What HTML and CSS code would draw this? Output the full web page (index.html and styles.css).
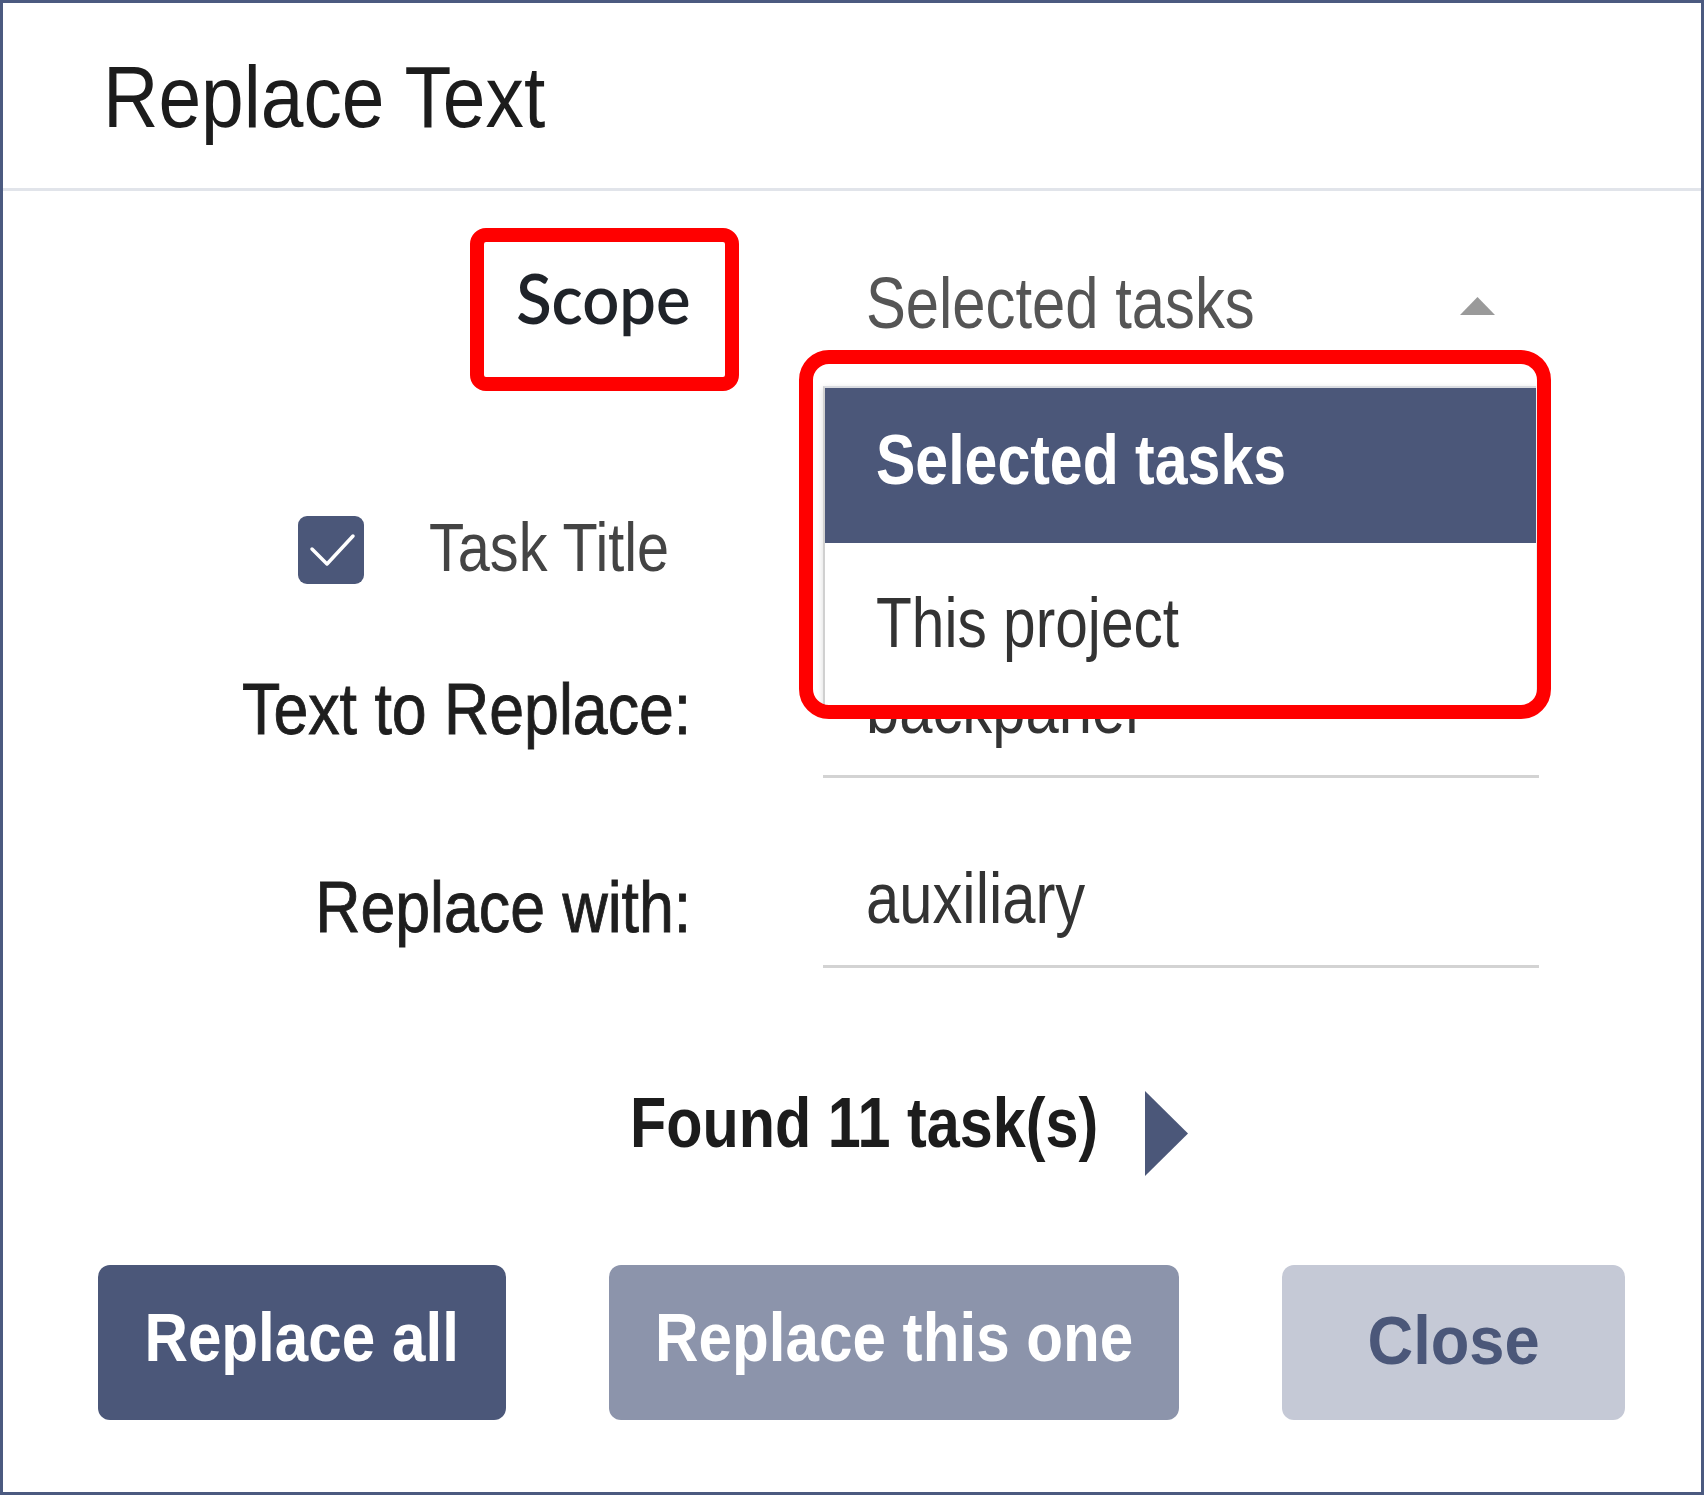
FILE: index.html
```html
<!DOCTYPE html>
<html lang="en">
<head>
<meta charset="utf-8">
<title>Replace Text</title>
<link rel="stylesheet" href="styles.css">
</head>
<body>
<div class="dialog">
  <header class="dlg-header">
    <h1 class="dlg-title"><span class="txt">Replace Text</span></h1>
  </header>
  <div class="dlg-body">
    <div class="row row-scope">
      <div class="label label-scope"><span class="txt">Scope</span></div>
      <div class="select">
        <span class="select-value txt">Selected tasks</span>
        <svg class="select-arrow" width="39" height="22" viewBox="0 0 39 22"><polygon points="19.5,2 37,20 2,20" fill="#9a9a9a"/></svg>
      </div>
    </div>
    <div class="row-check">
      <span class="checkbox"><svg width="66" height="68" viewBox="0 0 66 68"><polyline points="14,33 29,48 55,20" fill="none" stroke="#fff" stroke-width="3.5" stroke-linecap="round" stroke-linejoin="round"/></svg></span>
      <span class="check-label txt">Task Title</span>
    </div>
    <div class="row row-field row-find">
      <div class="label"><span class="txt">Text to Replace:</span></div>
      <div class="input"><span class="txt">backpanel</span></div>
    </div>
    <div class="row row-field row-with">
      <div class="label"><span class="txt">Replace with:</span></div>
      <div class="input"><span class="txt">auxiliary</span></div>
    </div>
    <div class="found">
      <span class="found-text txt">Found 11 task(s)</span>
      <svg class="found-arrow" width="43" height="85" viewBox="0 0 43 85"><polygon points="0,0 43,42.5 0,85" fill="#4b5779"/></svg>
    </div>
    <div class="buttons">
      <button class="btn btn-primary"><span class="txt">Replace all</span></button>
      <button class="btn btn-secondary"><span class="txt">Replace this one</span></button>
      <button class="btn btn-close"><span class="txt">Close</span></button>
    </div>
  </div>
  <ul class="dropdown">
    <li class="dd-item dd-selected"><span class="txt">Selected tasks</span></li>
    <li class="dd-item dd-other"><span class="txt">This project</span></li>
  </ul>
  <div class="highlight hl-scope"></div>
  <div class="highlight hl-dropdown"></div>
</div>
</body>
</html>
```
FILE: styles.css
```css
html, body {
  margin: 0;
  padding: 0;
  background: #ffffff;
}

.dialog {
  position: relative;
  width: 1704px;
  height: 1495px;
  box-sizing: border-box;
  border: 3px solid #4b5a80;
  background: #ffffff;
  font-family: "Liberation Sans", Arial, sans-serif;
  color: #222222;
  line-height: 1;
  overflow: hidden;
}

/* the UI text is set in a narrow grotesque: a condensed Arial-like face */
.txt {
  display: inline-block;
  white-space: nowrap;
  transform-origin: left center;
  transform: scaleX(0.84);
}

/* header */
.dlg-header {
  padding: 50px 0 0 100px;
  height: 135px;
  border-bottom: 3px solid #e1e4ea;
}

.dlg-title {
  margin: 0;
  font-size: 88px;
  font-weight: 400;
  line-height: 1;
  color: #1c1c1c;
}

.dlg-title .txt {
  transform: scaleX(0.872);
}

/* body */
.dlg-body {
  display: flex;
  flex-direction: column;
}

.row {
  display: grid;
  grid-template-columns: 688px 716px;
  column-gap: 132px;
}

.label {
  text-align: right;
  font-size: 72px;
  font-weight: 400;
  color: #1e1e1e;
  -webkit-text-stroke: 0.9px #1e1e1e;
}

.label .txt {
  transform-origin: right center;
  transform: scaleX(0.87);
}

.row-scope {
  margin-top: 71px;
  align-items: start;
}

.label-scope {
  font-family: Lato, "Open Sans", sans-serif;
  font-size: 70px;
  font-weight: 600;
  color: #1f2329;
  -webkit-text-stroke: 0;
}

.label-scope .txt {
  transform: scaleX(0.93);
}

.select {
  display: flex;
  align-items: center;
  justify-content: space-between;
  padding: 5px 42px 0 43px;
}

.select-value {
  font-size: 72px;
  color: #555555;
  transform: scaleX(0.83);
}

.select-arrow {
  display: block;
  margin-top: 6px;
}

/* checkbox row */
.row-check {
  display: flex;
  align-items: flex-start;
  margin-top: 177px;
  padding-left: 295px;
  gap: 65px;
}

.checkbox {
  display: block;
  width: 66px;
  height: 68px;
  border-radius: 9px;
  background: #4b5779;
}

.checkbox svg {
  display: block;
}

.check-label {
  margin-top: -3px;
  font-size: 69px;
  color: #444444;
  transform: scaleX(0.835);
}

/* text fields */
.row-field {
  align-items: end;
}

.row-field .label {
  margin-bottom: 25px;
}

.row-find .label {
  margin-bottom: 33px;
}

.row-find {
  margin-top: 88px;
}

.row-with {
  margin-top: 84px;
}

.input {
  padding: 0 0 31px 43px;
  border-bottom: 3px solid #d3d3d3;
  font-size: 72px;
  color: #333333;
}

.input .txt {
  transform: scaleX(0.83);
}

/* found */
.found {
  display: flex;
  align-items: flex-start;
  margin-top: 119px;
  padding-left: 627px;
}

.found-text {
  font-size: 71px;
  font-weight: 700;
  color: #1c1c1c;
  transform: scaleX(0.836);
}

.found-arrow {
  display: block;
  margin: 4px 0 0 -45px;
}

/* buttons */
.buttons {
  display: flex;
  gap: 103px;
  margin-top: 89px;
  padding-left: 95px;
}

.btn {
  height: 155px;
  border: 0;
  border-radius: 12px;
  padding: 0 0 12px;
  font-family: inherit;
  font-size: 68px;
  font-weight: 700;
  line-height: 1;
  color: #ffffff;
  text-align: center;
  cursor: pointer;
}

.btn .txt {
  transform-origin: center center;
  transform: scaleX(0.885);
}

.btn-primary {
  width: 408px;
  background: #4b5779;
}

.btn-secondary {
  width: 570px;
  background: #8c94ab;
}

.btn-close {
  width: 343px;
  background: #c5c9d6;
  color: #4b5779;
  padding-bottom: 6px;
}

.btn-close .txt {
  transform: scaleX(0.93);
}

/* dropdown menu */
.dropdown {
  position: absolute;
  left: 820px;
  top: 383px;
  width: 713px;
  height: 320px;
  margin: 0;
  padding: 0;
  list-style: none;
  box-sizing: border-box;
  background: #ffffff;
  border-top: 2px solid #d9dbe0;
  border-left: 2px solid #d0d0d0;
  box-shadow: 0 2px 6px rgba(0, 0, 0, 0.15);
  overflow: hidden;
}

.dd-item {
  box-sizing: border-box;
  height: 155px;
  padding-left: 51px;
}

.dd-selected {
  padding-top: 37px;
  background: #4b5779;
  color: #ffffff;
  font-size: 70px;
  font-weight: 700;
}

.dd-selected .txt {
  transform: scaleX(0.843);
}

.dd-other {
  padding-top: 44px;
  color: #333333;
  font-size: 71px;
}

.dd-other .txt {
  transform: scaleX(0.826);
}

/* annotation highlights */
.highlight {
  position: absolute;
  box-sizing: border-box;
  border: 14px solid #ff0000;
}

.hl-scope {
  left: 467px;
  top: 225px;
  width: 269px;
  height: 163px;
  border-radius: 16px;
}

.hl-dropdown {
  left: 796px;
  top: 347px;
  width: 752px;
  height: 369px;
  border-radius: 30px;
}
```
